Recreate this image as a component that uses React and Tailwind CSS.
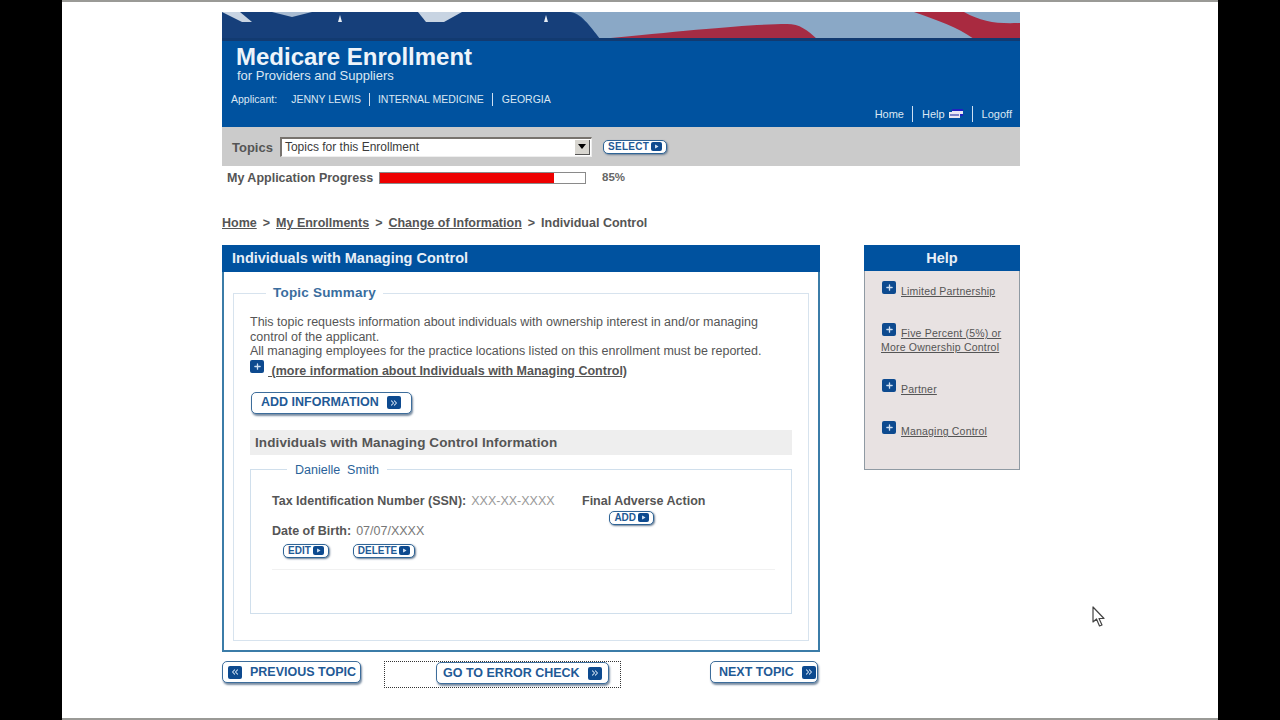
import React from "react";
import { ChevronsLeft, ChevronsRight, Play, Plus } from "lucide-react";

const BlueBox = ({ className, children }) => (
  <span className={`inline-flex items-center justify-center rounded-[2px] bg-[#0d4a8f] text-[#cfe0f2] ${className}`}>
    {children}
  </span>
);

const PlusBox = () => (
  <BlueBox className="w-[14px] h-[13px]">
    <Plus size={9} strokeWidth={3.5} />
  </BlueBox>
);

const SmallButton = ({ label, className = "" }) => (
  <button className={`inline-flex items-center gap-[2px] h-[14px] px-[4px] rounded-[5px] border border-[#2f6496] bg-white text-[#1f5a96] text-[10px] font-bold shadow-[1px_1px_2px_#6b7f95] ${className}`}>
    {label}
    <BlueBox className="w-[11px] h-[9px]">
      <Play size={5} fill="currentColor" strokeWidth={0} />
    </BlueBox>
  </button>
);

const BigButton = ({ label, left, className = "" }) => (
  <button className={`flex items-center h-[22px] rounded-[5px] border border-[#3d6d9b] bg-white text-[#1f5a96] text-[12.5px] font-bold shadow-[1px_2px_2px_#7b8ea3] ${className}`}>
    {left && (
      <BlueBox className="w-[14px] h-[13px] mr-[8px]">
        <ChevronsLeft size={10} strokeWidth={2.5} />
      </BlueBox>
    )}
    {label}
    {!left && (
      <BlueBox className="w-[14px] h-[13px] ml-[8px]">
        <ChevronsRight size={10} strokeWidth={2.5} />
      </BlueBox>
    )}
  </button>
);

const FlagStrip = () => (
  <svg className="block w-full h-[29px]" viewBox="0 0 798 29" preserveAspectRatio="none">
    <rect width="798" height="29" fill="#1c4a86" />
    <path d="M0 0H598V0H345C355 0 365 10 378 27H0Z" fill="#163f7a" />
    <path d="M348 0H798V27H378C368 14 358 0 348 0Z" fill="#8aa8c6" />
    <path d="M378 27C470 18 530 12 565 12C578 12 585 18 595 27Z" fill="#a52c44" />
    <path d="M692 0H742C760 10 775 12 798 11V27H752C735 15 715 8 692 0Z" fill="#a92a40" />
    <rect y="26" width="798" height="3" fill="#123a70" />
    <path d="M0 0H18L30 10H20Z" fill="#c8d4e2" />
    <path d="M50 0H90L70 5Z" fill="#a9bcd2" />
    <path d="M196 0H240L222 10H204Z" fill="#c8d4e2" />
    <path d="M116 10L118 3L120 10Z" fill="#e6edf5" />
    <path d="M322 10L324 3L326 10Z" fill="#e6edf5" />
  </svg>
);

const helpLinks = [
  { text: "Limited Partnership", className: "mb-[25px]" },
  { text: "Five Percent (5%) or More Ownership Control", className: "mb-[25px]" },
  { text: "Partner", className: "mb-[25px]" },
  { text: "Managing Control", className: "" },
];

const App = () => {
  return (
    <div className="w-full h-[720px] overflow-hidden bg-black flex justify-center font-['Liberation_Sans',Arial,sans-serif]">
      <div className="relative w-[1156px] h-[720px] bg-white border-t-2 border-b-2 border-[#9a9a96]">
        <div className="w-[798px] ml-[160px] pt-[10px]">
          <FlagStrip />

          <div className="relative h-[86px] bg-[#00529f] text-[#dbe7f3]">
            <div className="pl-[14px] pt-[2px]">
              <h1 className="text-[24px] leading-[28px] font-bold text-[#eef4fa]">Medicare Enrollment</h1>
              <p className="text-[13px] leading-[10px] pl-px">for Providers and Suppliers</p>
            </div>
            <div className="flex items-center mt-[12px] pl-[9px] text-[10.5px] leading-[13px]">
              <span className="mr-[14px]">Applicant:</span>
              <span className="pr-[8px] border-r border-[#cfe0f2]">JENNY LEWIS</span>
              <span className="px-[8px] border-r border-[#cfe0f2]">INTERNAL MEDICINE</span>
              <span className="pl-[9px]">GEORGIA</span>
            </div>
            <div className="absolute right-[8px] bottom-[5px] flex items-center text-[11px] leading-[16px]">
              <span className="pr-[8px] border-r border-[#cfe0f2]">Home</span>
              <span className="flex items-center gap-[4px] px-[9px] border-r border-[#cfe0f2]">
                Help
                <svg width="14" height="10" viewBox="0 0 14 10">
                  <rect x="3" width="11" height="7" fill="#2020c0" />
                  <rect x="3" y="2" width="11" height="3" fill="#e8e8f4" />
                  <rect y="3" width="11" height="6" fill="#e8e8f4" />
                  <rect x="1" y="5" width="9" height="2" fill="#7c84c8" />
                </svg>
              </span>
              <span className="pl-[9px]">Logoff</span>
            </div>
          </div>

          <div className="flex items-center h-[39px] bg-[#cbcbcb] pl-[10px]">
            <span className="text-[13px] font-bold text-[#555] mr-[7px] mt-[2px]">Topics</span>
            <div className="flex items-center justify-between w-[312px] h-[20px] bg-white border-t-2 border-l-2 border-[#77736e] border-r border-b border-r-[#eee] border-b-[#eee] text-[12px] text-[#3a3a3a] pl-[3px]">
              Topics for this Enrollment
              <span className="flex items-center justify-center w-[15px] h-[15px] bg-[#d8d6d0] border-r border-b border-[#555] mr-[1px]">
                <span className="w-0 h-0 border-x-[4px] border-t-[5px] border-x-transparent border-t-black" />
              </span>
            </div>
            <SmallButton label="SELECT" className="ml-[11px] tracking-[0.3px]" />
          </div>

          <div className="flex items-center h-[24px] pl-[5px]">
            <span className="text-[12.5px] font-bold text-[#555] w-[152px]">My Application Progress</span>
            <div className="w-[207px] h-[12px] bg-white border border-[#8a8a8a]">
              <div className="w-[85%] h-full bg-[#ee0000]" />
            </div>
            <span className="ml-[16px] text-[11.5px] font-bold text-[#666]">85%</span>
          </div>

          <nav className="flex items-center mt-[25px] text-[12.5px] leading-[16px] font-bold text-[#555]">
            <a className="underline">Home</a>
            <span className="mx-[6px]">&gt;</span>
            <a className="underline">My Enrollments</a>
            <span className="mx-[6px]">&gt;</span>
            <a className="underline">Change of Information</a>
            <span className="mx-[6px]">&gt;</span>
            <span>Individual Control</span>
          </nav>

          <div className="flex justify-between items-start mt-[14px]">
            <div className="w-[598px]">
              <div className="h-[407px] border-2 border-[#3b7ca8] border-t-0">
                <h2 className="h-[27px] -mx-[2px] pl-[10px] bg-[#00529f] text-[#e8eff7] text-[14.5px] leading-[27px] font-bold">
                  Individuals with Managing Control
                </h2>
                <fieldset className="mx-[9px] mt-[13px] h-[356px] border border-[#d7e3ee] px-[16px]">
                  <legend className="ml-[16px] px-[7px] text-[13.5px] leading-[16px] font-bold text-[#3a6d9e] tracking-[0.2px]">Topic Summary</legend>
                  <div className="mt-[14px] text-[12.5px] leading-[14.5px] text-[#555]">
                    <p>
                      This topic requests information about individuals with ownership interest in and/or managing
                      <br />
                      control of the applicant.
                      <br />
                      All managing employees for the practice locations listed on this enrollment must be reported.
                    </p>
                    <p className="flex items-start h-[17px] mt-[1px]">
                      <PlusBox />
                      <a className="ml-[4px] mt-[4px] font-bold underline text-[12.5px] whitespace-pre"> (more information about Individuals with Managing Control)</a>
                    </p>
                  </div>
                  <BigButton label="ADD INFORMATION" className="mt-[15px] ml-px w-[161px] pl-[9px]" />
                  <h3 className="h-[25px] mt-[16px] pl-[5px] bg-[#eeeeee] text-[13.5px] leading-[25px] font-bold text-[#555] tracking-[0.1px]">
                    Individuals with Managing Control Information
                  </h3>
                  <fieldset className="mt-[7px] h-[152px] border border-[#d0dfec] pl-[21px]">
                    <legend className="ml-[15px] px-[8px] text-[12.5px] leading-[16px] text-[#2a6299]">Danielle&nbsp; Smith</legend>
                    <div className="flex mt-[15px] text-[12.5px] leading-[16px]">
                      <div className="w-[310px]">
                        <p className="font-bold text-[#555]">
                          Tax Identification Number (SSN):
                          <span className="ml-[5px] font-normal text-[#999]">XXX-XX-XXXX</span>
                        </p>
                        <p className="mt-[14px] font-bold text-[#555]">
                          Date of Birth:
                          <span className="ml-[5px] font-normal text-[#777]">07/07/XXXX</span>
                        </p>
                      </div>
                      <div className="text-center">
                        <p className="font-bold text-[#555]">Final Adverse Action</p>
                        <SmallButton label="ADD" className="block -mt-[1px] mr-[24px]" />
                      </div>
                    </div>
                    <div className="flex mt-[5px] pl-[11px] pb-[11px] mr-[16px] border-b border-[#f1f1f1]">
                      <SmallButton label="EDIT" />
                      <SmallButton label="DELETE" className="ml-[24px]" />
                    </div>
                  </fieldset>
                </fieldset>
              </div>
              <div className="flex items-start mt-[9px]">
                <BigButton label="PREVIOUS TOPIC" left className="w-[139px] pl-[5px]" />
                <div className="flex justify-end w-[237px] h-[27px] ml-[23px] border border-dotted border-[#333]">
                  <BigButton label="GO TO ERROR CHECK" className="w-[173px] pl-[6px] mr-[11px]" />
                </div>
                <BigButton label="NEXT TOPIC" className="w-[108px] pl-[8px] ml-auto mr-[2px]" />
              </div>
            </div>

            <aside className="w-[156px] h-[225px] bg-[#e8e2e2] border border-[#8f9aa3]">
              <h2 className="h-[26px] -mt-px -mx-px bg-[#00529f] text-center text-[#e8eff7] text-[14.5px] leading-[26px] font-bold">
                Help
              </h2>
              <ul className="pt-[10px] pl-[16px] pr-[8px] text-[10.5px] leading-[14px] tracking-[0.2px] text-[#555]">
                {helpLinks.map((link) => (
                  <li key={link.text} className={link.className}>
                    <span className="inline-block w-[14px] h-[13px] align-[3px] mr-[5px] ml-px">
                      <PlusBox />
                    </span>
                    <a className="underline">{link.text}</a>
                  </li>
                ))}
              </ul>
            </aside>
          </div>
        </div>

        <svg className="absolute left-[1029px] top-[604px]" width="16" height="22" viewBox="0 0 16 22">
          <path d="M2 1V16L5.5 13L8.5 20L11 19L8 12.5H13Z" fill="#fff" stroke="#444" strokeWidth="1.2" strokeLinejoin="round" />
        </svg>
      </div>
    </div>
  );
};

export default App;
